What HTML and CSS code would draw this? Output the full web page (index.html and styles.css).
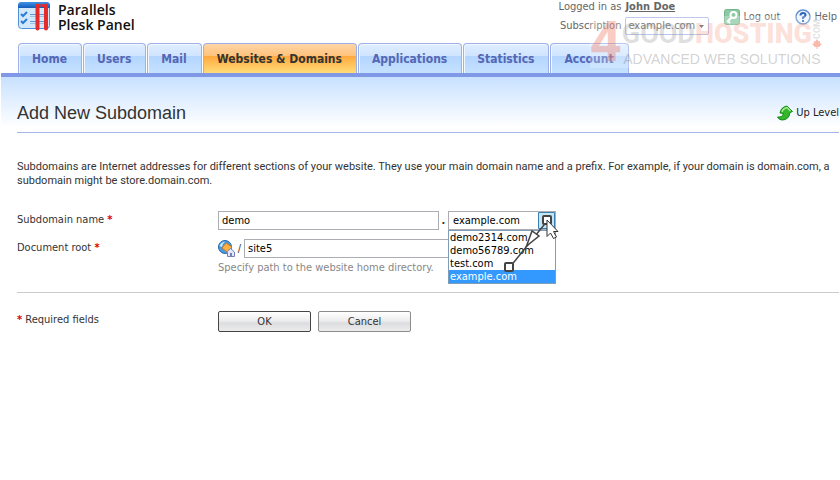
FILE: index.html
```html
<!DOCTYPE html>
<html lang="en">
<head>
  <meta charset="UTF-8">
  <meta name="viewport" content="width=device-width, initial-scale=1.0">
  <title>Add New Subdomain</title>
  <link rel="stylesheet" href="styles.css">
</head>
<body>
  <header class="header">
    <a class="logo" href="#">
      <svg width="33" height="30" viewBox="0 0 33 30" aria-hidden="true">
        <defs>
          <linearGradient id="logoBar" x1="0" y1="0" x2="0" y2="1">
            <stop offset="0" stop-color="#3f93e6"/>
            <stop offset="1" stop-color="#145bb8"/>
          </linearGradient>
        </defs>
        <rect x="0.5" y="0.5" width="31" height="26" rx="3" fill="#d3e8fb" stroke="#4f90d8"/>
        <path d="M0 6V3.500Q0 0 3.500 0H28.500Q32 0 32 3.500V6Z" fill="url(#logoBar)"/>
        <path d="M3 12l2 2 4-4M3 19l2 2 4-4" fill="none" stroke="#2b7bd8" stroke-width="2"/>
        <path d="M12 12.500h14M12 19.500h14" stroke="#5d9ad2"/>
        <path d="M12 14.500h14M12 21.500h14" stroke="#9cc4e8"/>
        <path d="M19.500 3.500v23M28 3.500v23" stroke="#e62b2b" stroke-width="4" stroke-linecap="round"/>
        <path d="M22.500 2h3v3h-3z" fill="#e62b2b"/>
      </svg>
      <span class="logo-text">Parallels<br>Plesk Panel</span>
    </a>
    <div class="session">
      <div class="account">
        <span class="account-label">Logged in as</span>
        <a class="user" href="#">John Doe</a>
        <label class="account-label" for="subscription">Subscription</label>
        <select class="subscription" id="subscription">
          <option>example.com</option>
        </select>
      </div>
      <a class="tool" href="#">
        <svg width="16" height="16" viewBox="0 0 16 16" aria-hidden="true">
          <rect x="0.5" y="0.5" width="15" height="15" rx="2" fill="#8ccaa4" stroke="#6fb48a"/>
          <circle cx="9.500" cy="6" r="3" fill="none" stroke="#fff" stroke-width="2"/>
          <path d="M7.500 8.500L3 13M4 12l2 2" stroke="#fff" stroke-width="2"/>
        </svg>
        Log out
      </a>
      <a class="tool" href="#">
        <svg width="16" height="16" viewBox="0 0 16 16" aria-hidden="true">
          <circle cx="8" cy="8" r="7" fill="#eef5fd" stroke="#5f8fd0" stroke-width="1.500"/>
          <path d="M5.500 6.500Q5.500 4 8 4T10.500 6.300Q10.500 7.500 8 8.500V10M8 11v2" fill="none" stroke="#2f66b8" stroke-width="2"/>
        </svg>
        Help
      </a>
    </div>
    <div class="watermark" aria-hidden="true">
      <div class="watermark-four">4</div>
      <div>
        <div class="watermark-name">
          <span>GOOD<b>HOSTING</b></span>
          <div class="watermark-side">
            <span class="watermark-com">COM</span>
            <svg width="10" height="10" viewBox="0 0 10 10">
              <path d="M5 0l1.500 2.500L8 2v2.500L10 5 7 8H5.500v2h-1V8H3L0 5l2-.5V2l1.500.5z" fill="#f9b9ab"/>
            </svg>
          </div>
        </div>
        <div class="watermark-line">ADVANCED WEB SOLUTIONS</div>
      </div>
    </div>
  </header>

  <nav class="tabs">
    <a class="tab" href="#">Home</a>
    <a class="tab" href="#">Users</a>
    <a class="tab" href="#">Mail</a>
    <a class="tab active" href="#">Websites &amp; Domains</a>
    <a class="tab" href="#">Applications</a>
    <a class="tab" href="#">Statistics</a>
    <a class="tab" href="#">Account</a>
  </nav>

  <main class="page">
    <div class="title-row">
      <h1>Add New Subdomain</h1>
      <a class="up-level" href="#">
        <svg width="16" height="16" viewBox="0 0 16 16" aria-hidden="true">
          <path d="M0.500 12Q5.500 12.500 6.500 8.500L3 8Q4 2 10 1L15.500 6.500L13 7.500Q12 15 5 15Q2 15 0.500 12Z" fill="#35b52c" stroke="#138a17"/>
          <path d="M5 7Q6 3.500 10 2.500L13.500 6" fill="none" stroke="#a5ec90" stroke-width="1.500"/>
        </svg>
        Up Level
      </a>
    </div>

    <p class="intro">Subdomains are Internet addresses for different sections of your website. They use your main domain name and a prefix. For example, if your domain is domain.com, a subdomain might be store.domain.com.</p>

    <form class="form">
      <div class="row">
        <label class="label" for="name">Subdomain name <span class="req">*</span></label>
        <div class="field">
          <input class="text name" id="name" type="text" value="demo">
          <span class="dot">.</span>
          <div class="combo">
            <select class="domain" id="domain" aria-label="Domain">
              <option>example.com</option>
            </select>
            <select class="domain-list" size="4" aria-label="Domains">
              <option>demo2314.com</option>
              <option>demo56789.com</option>
              <option>test.com</option>
              <option selected>example.com</option>
            </select>
            <svg class="drag" width="64" height="64" viewBox="0 0 64 64" aria-hidden="true">
              <path d="M6 52L44 5" stroke="#444" stroke-width="1.500"/>
              <path d="M22.500 31L28 16L35 21Z" fill="#fff" stroke="#444" stroke-width="1.500"/>
              <rect x="1" y="48" width="8" height="8" rx="1" fill="#fff" stroke="#444" stroke-width="2"/>
              <rect x="39" y="1" width="8" height="8" rx="1" fill="#fff" stroke="#444" stroke-width="2"/>
              <path d="M43 5V21.500L46.500 18L49.500 23.500L52.500 22L49.500 16.500H54Z" fill="#fff" stroke="#333"/>
            </svg>
          </div>
        </div>
      </div>
      <div class="row">
        <label class="label" for="root">Document root <span class="req">*</span></label>
        <div>
          <div class="field root-field">
            <svg width="17" height="17" viewBox="0 0 17 17" aria-hidden="true">
              <circle cx="7" cy="7" r="6.500" fill="#4b9ae0" stroke="#2464ae"/>
              <path d="M1.500 6Q3 2 7 1.500Q4 4 4 7Z" fill="#c8eafc"/>
              <path d="M8 3L14 7L9 12L4 8Z" fill="#fbb243" stroke="#c97a1c"/>
              <path d="M8 12.500L12.500 8.500L16.500 12V16.500H9.500V12.500Z" fill="#e3e6f7" stroke="#7480b8"/>
              <path d="M12 13h2v3.500h-2z" fill="#7480b8"/>
            </svg>
            <span class="slash">/</span>
            <input class="text root" id="root" type="text" value="site5">
          </div>
          <div class="hint">Specify path to the website home directory.</div>
        </div>
      </div>
      <div class="row actions">
        <div class="label"><span class="req">*</span> Required fields</div>
        <div class="buttons">
          <button class="btn primary" type="button">OK</button>
          <button class="btn" type="button">Cancel</button>
        </div>
      </div>
    </form>
  </main>
</body>
</html>
```
FILE: styles.css
```css
* { box-sizing: border-box; }
body { margin: 0; background: #fff; color: #333; font: 11px/14px "DejaVu Sans Condensed", "DejaVu Sans", sans-serif; }
a { color: inherit; text-decoration: none; }
svg { display: block; flex: none; }
input, select, button { font: inherit; color: #000; margin: 0; }

.header { position: relative; display: flex; justify-content: space-between; height: 43px; padding-left: 18px; }
.logo { display: flex; gap: 7px; padding-top: 2px; }
.logo-text { color: #111; font: 600 14px/15px "Open Sans", sans-serif; }
.session { display: flex; gap: 15px; padding-right: 3px; color: #666; }
.account { display: grid; grid-template-columns: auto auto; column-gap: 4px; row-gap: 3px; align-content: start; justify-items: start; align-items: center; }
.account-label { justify-self: end; }
.user { font-weight: bold; text-decoration: underline; }
.subscription { width: 84px; height: 18px; padding: 0 2px; border: 1px solid #aab6e6; border-radius: 2px; color: #555; appearance: none; background: #fff url("data:image/svg+xml,%3Csvg xmlns='http://www.w3.org/2000/svg' width='5' height='3'%3E%3Cpath d='M0 0h5L2.500 3z' fill='%23555'/%3E%3C/svg%3E") no-repeat right 4px center; }
.tool { display: flex; gap: 3px; align-items: center; height: 16px; margin-top: 9px; white-space: nowrap; }

.watermark { position: absolute; z-index: 2; right: 18px; top: 16px; display: flex; background: rgba(255, 255, 255, .25); pointer-events: none; }
.watermark-four { color: rgba(240, 90, 60, .3); font: bold 56px/52px "Roboto", sans-serif; }
.watermark-name { display: flex; align-items: center; height: 36px; color: rgba(130, 130, 130, .25); font: bold 27px/36px "Roboto", sans-serif; }
.watermark-name b { color: rgba(240, 90, 60, .2); }
.watermark-side { display: flex; flex-direction: column; align-items: center; gap: 1px; }
.watermark-com { font-size: 9px; line-height: 10px; writing-mode: vertical-rl; transform: rotate(180deg); }
.watermark-line { color: rgba(100, 100, 100, .3); font: 14px/15px "Liberation Sans", sans-serif; text-align: center; }

.tabs { display: flex; gap: 1px; margin-left: 1px; padding-left: 17px; border-bottom: 4px solid #8099e6; }
.tab { height: 30px; padding: 0 14px 0 13px; border: 1px solid #9fb1ea; border-bottom: 0; border-radius: 4px 4px 0 0; background: linear-gradient(#e0eeff, #cfe4ff 12px, #b3d5ff 12px, #c5e1ff); box-shadow: inset 1px 1px #f0f7ff; color: #5566b5; font-size: 12px; font-weight: bold; line-height: 30px; }
.tab.active { background: linear-gradient(#ffd5a6, #ffc27b 12px, #ffa83c 12px, #ffdc78); box-shadow: none; color: #333; }

.page { margin-left: 1px; padding: 0 1px 0 16px; background: linear-gradient(#c8e1ff, #fff 50px) no-repeat; }
.title-row { display: flex; justify-content: space-between; align-items: center; height: 56px; padding-top: 16px; border-bottom: 1px solid #a3b5ea; }
h1 { margin: 0; font: 18px/22px "Liberation Sans", sans-serif; }
.up-level { display: flex; gap: 3px; align-items: center; color: #222; }
.intro { margin: 27px 0 23px; font-family: "Roboto", sans-serif; }
.row { display: grid; grid-template-columns: 201px 1fr; }
.label { padding-top: 2px; }
.req { color: #e00000; font-weight: bold; }
.field { display: flex; align-items: center; height: 19px; }
.text { height: 19px; padding: 0 3px; border: 1px solid #abadb3; background: #fff; }
.name { width: 221px; }
.dot { width: 9px; text-align: center; font-weight: bold; }
.combo { position: relative; }
.domain { display: block; width: 108px; height: 19px; padding: 0 4px; border: 1px solid #abadb3; appearance: none; background: #fff url("data:image/svg+xml,%3Csvg xmlns='http://www.w3.org/2000/svg' width='17' height='17'%3E%3Cpath d='M.5.5h16v16H.5z' fill='%23c4e5f6' stroke='%233c7fb1'/%3E%3C/svg%3E") no-repeat right 0 center; }
.domain-list { position: absolute; z-index: 1; top: 19px; left: 0; width: 108px; height: 54px; padding: 0; border: 1px solid #7f9db9; border-radius: 0; background: #fff; overflow: hidden; scrollbar-width: none; }
.domain-list option { height: 13px; min-height: 13px; padding: 0 1px; line-height: 13px; }
.domain-list option:checked { background: #39f linear-gradient(#39f, #39f); color: #fff; }
.drag { position: absolute; z-index: 2; left: 56px; top: 4px; }
.root-field { margin-top: 9px; }
.slash { width: 9px; text-align: center; }
.root { width: 221px; }
.row + .row .label { padding-top: 11px; }
.hint { margin-top: 3px; color: #888; }
.row.actions { margin-top: 17px; padding-top: 18px; border-top: 1px solid #ccc; }
.row.actions .label { padding-top: 2px; }
.buttons { display: flex; gap: 7px; }
.btn { width: 93px; height: 21px; padding: 0; border: 1px solid #8c8c8c; border-radius: 2px; background: linear-gradient(#fff, #ececee 9px, #dcdde0 11px, #ececec); color: #333; }
.btn.primary { border-color: #444; }
```
